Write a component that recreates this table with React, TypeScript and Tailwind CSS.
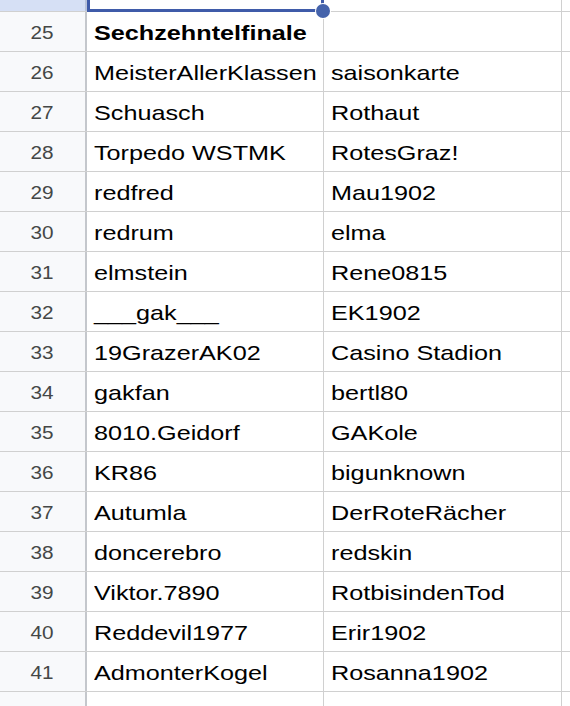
import React from "react";

const rows: [number, string, string, boolean?][] = [
  [25, "Sechzehntelfinale", "", true],
  [26, "MeisterAllerKlassen", "saisonkarte"],
  [27, "Schuasch", "Rothaut"],
  [28, "Torpedo WSTMK", "RotesGraz!"],
  [29, "redfred", "Mau1902"],
  [30, "redrum", "elma"],
  [31, "elmstein", "Rene0815"],
  [32, "___gak___", "EK1902"],
  [33, "19GrazerAK02", "Casino Stadion"],
  [34, "gakfan", "bertl80"],
  [35, "8010.Geidorf", "GAKole"],
  [36, "KR86", "bigunknown"],
  [37, "Autumla", "DerRoteRächer"],
  [38, "doncerebro", "redskin"],
  [39, "Viktor.7890", "RotbisindenTod"],
  [40, "Reddevil1977", "Erir1902"],
  [41, "AdmonterKogel", "Rosanna1902"],
  [42, "", ""],
];

// the screenshot is stretched sideways, so the glyphs are widened
const Txt: React.FC<{ children: React.ReactNode; bold?: boolean }> = ({ children, bold }) => (
  <span
    className={`inline-block origin-left scale-x-[1.2] text-[21px] text-black whitespace-nowrap ${
      bold ? "font-bold" : ""
    }`}
  >
    {children}
  </span>
);

const App: React.FC = () => {
  return (
    <div
      className="w-[570px] h-[706px] bg-white overflow-hidden"
      style={{ fontFamily: '"Liberation Sans", Arial, sans-serif' }}
    >
      {/* row 24, selected cell cut off at the top */}
      <div className="flex h-[12px] border-b border-[#d0d0d0]">
        <div className="w-[87px] shrink-0 bg-[#d6e0f5] border-r-2 border-[#b9c3d9]" />
        <div className="relative w-[237px] shrink-0 border-r border-[#d0d0d0]">
          <div className="absolute left-0 -right-px -top-[10px] -bottom-px border-[3px] border-[#3f5ba9]" />
          <div className="absolute -right-[7px] -bottom-[7px] w-[14px] h-[14px] rounded-full bg-[#4563ab] ring-1 ring-white z-10" />
        </div>
        <div className="w-[238px] shrink-0 border-r border-[#d0d0d0]" />
        <div className="flex-1" />
      </div>

      {rows.map(([n, a, b, bold]) => (
        <div key={n} className="flex h-[40px] border-b border-[#d0d0d0]">
          <div className="w-[87px] shrink-0 bg-[#f8f9fb] border-r-2 border-[#c4c7cc] flex items-center justify-center pt-[3px]">
            <span className="inline-block scale-x-[1.15] text-[18px] text-[#444746]">
              {n < 42 ? n : ""}
            </span>
          </div>
          <div className="w-[237px] shrink-0 border-r border-[#d0d0d0] flex items-center pl-[7px] pt-[3px] overflow-hidden">
            <Txt bold={bold}>{a}</Txt>
          </div>
          <div className="w-[238px] shrink-0 border-r border-[#d0d0d0] flex items-center pl-[7px] pt-[3px] overflow-hidden">
            <Txt>{b}</Txt>
          </div>
          <div className="flex-1" />
        </div>
      ))}
    </div>
  );
};

export default App;
